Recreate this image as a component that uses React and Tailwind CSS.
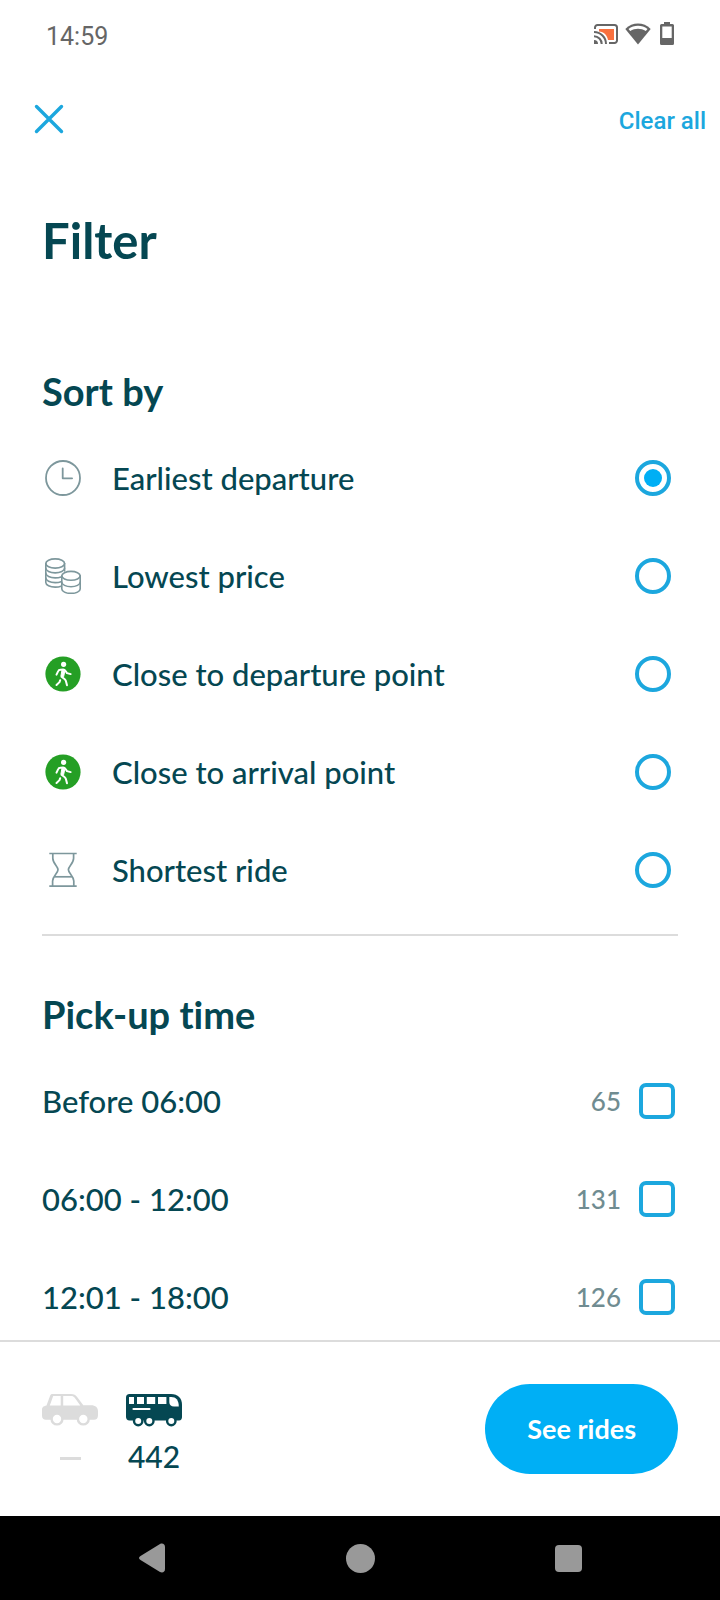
import { useState } from "react";

const sortOptions = [
    { id: "departure", label: "Earliest departure", Icon: ClockIcon },
    { id: "price", label: "Lowest price", Icon: CoinsIcon },
    { id: "near-departure", label: "Close to departure point", Icon: WalkIcon },
    { id: "near-arrival", label: "Close to arrival point", Icon: WalkIcon },
    { id: "shortest", label: "Shortest ride", Icon: HourglassIcon }
];

const pickupTimes = [
    { id: "early", label: "Before 06:00", count: 65 },
    { id: "morning", label: "06:00 - 12:00", count: 131 },
    { id: "afternoon", label: "12:01 - 18:00", count: 126 }
];

function ClockIcon() {
    return (
        <svg viewBox="0 0 36 36" className="size-9" fill="none" stroke="#7d979c" strokeWidth="1.8" strokeLinecap="round" strokeLinejoin="round">
            <circle cx="18" cy="18" r="17" />
            <path d="M17.7 8.5v9.8h9.4" />
        </svg>
    );
}

function CoinsIcon() {
    return (
        <svg viewBox="0 0 36 36" className="size-9" fill="none" stroke="#7d979c" strokeWidth="1.6" strokeLinecap="round">
            <ellipse cx="10.2" cy="5.5" rx="9.4" ry="4.6" />
            <path d="M.8 5.5v19c0 2.5 4.2 4.6 9.4 4.6 2.2 0 4.2-.3 5.8-.9M19.6 5.5V13" />
            <path d="M.8 10.3c0 2.5 4.2 4.6 9.4 4.6s9.4-2 9.4-4.6M.8 15.3c0 2.5 4.2 4.6 9.4 4.6 2.2 0 4.2-.3 5.800-.9M.8 20c0 2.500 4.200 4.600 9.400 4.600 2.200 0 4.200-.3 5.800-.9" />
            <ellipse cx="26" cy="17.8" rx="9.2" ry="4.4" />
            <path d="M16.8 17.8V31c0 2.400 4.100 4.400 9.200 4.400s9.200-2 9.200-4.400V17.800" />
            <path d="M16.8 24.300c0 2.400 4.100 4.400 9.200 4.400s9.200-2 9.200-4.400" />
        </svg>
    );
}

function WalkIcon() {
    return (
        <svg viewBox="0 0 36 36" className="size-9">
            <circle cx="18" cy="18" r="17.6" fill="#259f25" />
            <circle cx="18.6" cy="8.3" r="2.6" fill="#fff" />
            <path d="M17 14l3 .3-1.4 6.500-2.700-.6z" fill="#fff" stroke="#fff" strokeLinejoin="round" />
            <g fill="none" stroke="#fff" strokeWidth="2" strokeLinecap="round" strokeLinejoin="round">
                <path d="M11.5 18.600l1.700-3.500c.3-.8 1.200-1.300 2.300-1.400l2.600-.1c1 0 1.800.4 2.300 1.200l1.600 2.300 3.700 1" />
                <path d="M16.500 20.800l3 2.200c.8.6 1.200 1.300 1.400 2.100l1.100 4.100" />
                <path d="M15.200 24.200l-.7 1.900-3 2.900" />
            </g>
        </svg>
    );
}

function HourglassIcon() {
    return (
        <svg viewBox="0 0 36 36" className="size-9" fill="none" stroke="#7d979c" strokeWidth="1.7" strokeLinejoin="round">
            <path d="M4.3 1.500h27.400M4.300 34.200h27.400" />
            <path d="M7.800 1.500v4.700c0 5.200 5.200 8.300 5.200 11.600S7.800 24 7.600 29v5.200" />
            <path d="M28.600 1.500v4.700c0 5.200-5.200 8.300-5.200 11.600s5.200 6.200 5.400 11.200v5.200" />
            <path d="M9.200 24.800h18" />
        </svg>
    );
}

function CarIcon() {
    return (
        <svg viewBox="0 0 56 36" className="h-9 w-14">
            <path
                d="M10.500 2H29c3 0 4.600 1 6.300 3.200l6 8H49c4.500 0 7 2.300 7 6v4c0 3-1.500 4.500-4 4.500H4c-2.500 0-4-1.500-4-4V18c0-2.500 1-3.800 4.500-4.500L8 4c.5-1.400 1.200-2 2.500-2z"
                fill="#dcdcdc"
            />
            <path d="M11.200 4h7.500v9.500H7.800zM21.200 4h8c1.500 0 2.500.5 3.500 1.800l5.600 7.700H21.200z" fill="#fff" />
            <g fill="#fff" stroke="#dcdcdc" strokeWidth="2.400">
                <circle cx="15" cy="27" r="5.400" />
                <circle cx="41.300" cy="27" r="5.400" />
            </g>
        </svg>
    );
}

function BusIcon() {
    return (
        <svg viewBox="0 0 56 36" className="h-9 w-14">
            <path d="M3.500 2H45c7 0 11 4 11 11v12c0 2-1 3.400-3 3.400H3.500C1.200 28.400 0 27 0 25V5.500C0 3.200 1.200 2 3.500 2z" fill="#054752" />
            <path d="M3 5h5v7H3zM11 5h7v7h-7zM20.800 5h8.400v7h-8.400zM32 5h8.400v7H32z" fill="#fff" />
            <path d="M43.300 5h2c4.500 0 7.500 3 7.500 9.600H48c-3 0-4.700-1.800-4.700-4.600z" fill="#fff" />
            <path d="M7.500 17h16" stroke="#fff" strokeWidth="2.200" strokeLinecap="round" />
            <g fill="#fff" stroke="#054752" strokeWidth="2.400">
                <circle cx="12.200" cy="29" r="4.200" />
                <circle cx="23.300" cy="29" r="4.200" />
                <circle cx="45.300" cy="29" r="4.200" />
            </g>
        </svg>
    );
}

function StatusBar() {
    return (
        <div className="flex h-[72px] shrink-0 items-center justify-between pr-[43px] pl-[46px] text-[#666]">
            <span className="pt-0.5 text-[25px] leading-8">14:59</span>
            <div className="flex items-center gap-1.5 pb-1">
                <svg viewBox="0 0 26 24" className="h-6 w-[26px]">
                    <path d="M6 7h15v11h-6C14 13 11 10 6 9.500z" fill="#f9703e" />
                    <path d="M2 7V5.500A2.500 2.500 0 0 1 4.500 3h17A2.500 2.500 0 0 1 24 5.500v13a2.500 2.500 0 0 1-2.500 2.500H16" fill="none" stroke="#666" strokeWidth="2" />
                    <path d="M1 10a12 12 0 0 1 12 12M1 14.300A7.700 7.700 0 0 1 8.700 22" fill="none" stroke="#666" strokeWidth="2" />
                    <path d="M1 18a4 4 0 0 1 4 4H1z" fill="#666" />
                </svg>
                <svg viewBox="0 0 26 24" className="h-6 w-[26px]">
                    <path d="M13 22.500L.3 7C7.500-.3 18.500-.3 25.700 7z" fill="#666" />
                    <path d="M3.500 7C9 2.800 17 2.800 22.500 7l-1.700 2c-4.800-3-10.800-3-15.600 0z" fill="#fff" />
                </svg>
                <svg viewBox="0 0 20 24" className="h-6 w-5">
                    <path d="M7 0h6v2h2.500A1.500 1.500 0 0 1 17 3.500v18a1.500 1.500 0 0 1-1.500 1.500h-11A1.500 1.500 0 0 1 3 21.500v-18A1.500 1.500 0 0 1 4.500 2H7z" fill="#666" />
                    <path d="M5.300 4.500h9.400V16H5.300z" fill="#fff" />
                </svg>
            </div>
        </div>
    );
}

function NavBar() {
    return (
        <nav className="flex h-[84px] shrink-0 items-center bg-black px-12">
            <button type="button" aria-label="Back" className="flex flex-1 justify-center">
                <svg viewBox="0 0 30 30" className="size-[30px]" fill="#999">
                    <path d="M3.500 13L23 1c2.500-1.200 5 0 5 3v22c0 3-2.500 4.200-5 3L3.500 17c-2-1.300-2-2.700 0-4z" />
                </svg>
            </button>
            <button type="button" aria-label="Home" className="flex flex-1 justify-center">
                <span className="size-[29px] rounded-full bg-[#999]" />
            </button>
            <button type="button" aria-label="Recent apps" className="flex flex-1 justify-center">
                <span className="size-[27px] rounded-[4px] bg-[#999]" />
            </button>
        </nav>
    );
}

export default function App() {

    const [sort, setSort] = useState("departure");
    const [times, setTimes] = useState([]);

    function toggleTime(id) {

        setTimes((prev) => prev.includes(id) ? prev.filter((t) => t !== id) : [...prev, id]);

    }

    function clearAll() {

        setSort("departure");
        setTimes([]);

    }

    return (
        <div className="flex h-screen flex-col bg-white font-[Roboto,sans-serif] text-[#054752] [font-variant-ligatures:none]">

            <StatusBar />

            <header className="flex h-[94px] shrink-0 items-center justify-between pr-3.5 pl-[34px]">
                <button type="button" aria-label="Close">
                    <svg viewBox="0 0 30 30" className="size-[30px]" fill="none" stroke="#1ca7de" strokeWidth="3.400" strokeLinecap="round">
                        <path d="M2.500 2.500l25 25M27.500 2.500l-25 25" />
                    </svg>
                </button>
                <button type="button" onClick={clearAll} className="pt-1 text-[24px] leading-8 font-medium text-[#1ca7de]">
                    Clear all
                </button>
            </header>

            <main className="min-h-0 flex-1 overflow-hidden px-[42px] font-[Lato,sans-serif]">

                <h1 className="mt-11 text-[49px] leading-[60px] font-bold">Filter</h1>

                <section className="mt-[97px]">
                    <h2 className="mb-3.5 text-[38px] leading-[48px] font-bold">Sort by</h2>

                    {sortOptions.map(({ id, label, Icon }) => (
                        <label key={id} className="flex h-[98px] items-center pr-[7px] pl-[3px]">
                            <Icon />
                            <span className="ml-[31px] flex-1 text-[31px] leading-10 font-medium">{label}</span>
                            <input
                                type="radio"
                                name="sort"
                                value={id}
                                checked={sort === id}
                                onChange={() => setSort(id)}
                                className="size-9 appearance-none rounded-full border-4 border-[#1ca7de] bg-clip-content p-[5px] checked:bg-[#00aff5]"
                            />
                        </label>
                    ))}
                </section>

                <hr className="mt-[15px] border-t-2 border-[#dcdcdc]" />

                <section className="mt-[54px]">
                    <h2 className="mb-3.5 text-[38px] leading-[48px] font-bold">Pick-up time</h2>

                    {pickupTimes.map(({ id, label, count }) => (
                        <label key={id} className="flex h-[98px] items-center pr-[3px]">
                            <span className="flex-1 text-[31px] leading-10 font-medium">{label}</span>
                            <span className="mr-[18px] text-[26px] leading-8 font-medium text-[#708c91]">{count}</span>
                            <input
                                type="checkbox"
                                name="pickup"
                                value={id}
                                checked={times.includes(id)}
                                onChange={() => toggleTime(id)}
                                className="size-9 appearance-none rounded-[7px] border-4 border-[#1ca7de] checked:bg-[#00aff5]"
                            />
                        </label>
                    ))}
                </section>

            </main>

            <footer className="flex h-[176px] shrink-0 items-start justify-between border-t-2 border-[#dcdcdc] px-[42px] pt-[42px] font-[Lato,sans-serif]">
                <div className="flex gap-7 pt-2">
                    <div className="flex w-14 flex-col items-center">
                        <CarIcon />
                        <span className="mt-[29px] h-[3px] w-[21px] bg-[#dcdcdc]" />
                    </div>
                    <div className="flex w-14 flex-col items-center">
                        <BusIcon />
                        <span className="mt-2 text-[30px] leading-10 font-medium">442</span>
                    </div>
                </div>
                <button type="button" className="h-[90px] rounded-full bg-[#00aff5] px-[42px] text-[27px] leading-9 font-bold text-white">
                    See rides
                </button>
            </footer>

            <NavBar />

        </div>
    );

}
